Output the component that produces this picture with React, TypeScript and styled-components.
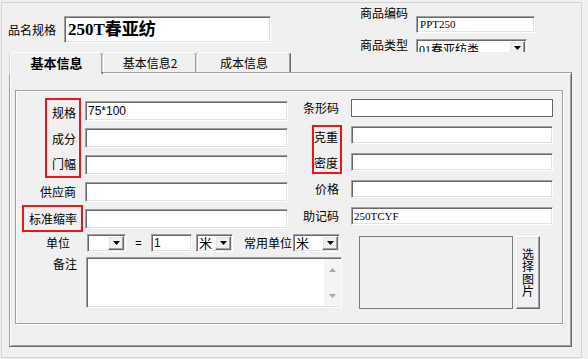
import React from 'react';
import styled, { createGlobalStyle, css } from 'styled-components';

const CJK = `"Noto Sans CJK SC", "Liberation Sans", sans-serif`;
const SONG = `"Liberation Serif", "Noto Sans CJK SC", serif`;

const GlobalStyle = createGlobalStyle`
  html, body {
    margin: 0;
    padding: 0;
    background: #f0f0f0;
  }
  body {
    font-family: ${CJK};
    font-size: 12px;
    color: #000;
  }
`;

const sunken = css`
  box-sizing: border-box;
  border-style: solid;
  border-width: 1px;
  border-color: #a0a0a0 #ffffff #ffffff #a0a0a0;
  box-shadow: inset 1px 1px 0 #696969, inset -1px -1px 0 #e3e3e3;
`;

const raised = css`
  box-sizing: border-box;
  border-style: solid;
  border-width: 1px;
  border-color: #ffffff #696969 #696969 #ffffff;
  box-shadow: inset -1px -1px 0 #a0a0a0, inset 1px 1px 0 #e3e3e3;
`;

type Place = { $r?: string; $c?: string };

const place = css<Place>`
  grid-row: ${p => p.$r || 'auto'};
  grid-column: ${p => p.$c || 'auto'};
`;

const Window = styled.div`
  width: 588px;
  height: 359px;
  overflow: hidden;
  box-sizing: border-box;
  padding: 2px 0 0 1px;
`;

const Frame = styled.div`
  width: 581px;
  height: 356px;
  box-sizing: border-box;
  border: 1px solid #d4d4d4;
`;

const Header = styled.div`
  display: flex;
  height: 49px;
`;

const NameGroup = styled.div`
  display: flex;
  align-items: center;
  gap: 8px;
  height: 27px;
  margin: 13px 0 0 6px;
`;

const Label = styled.span`
  font-family: ${CJK};
  font-size: 12px;
  line-height: 14px;
  white-space: nowrap;
`;

const NameInput = styled.div`
  ${sunken}
  width: 207px;
  height: 27px;
  background: #fff;
  padding: 0 3px;
  font-family: ${SONG};
  font-weight: bold;
  font-size: 17px;
  line-height: 25px;
  white-space: nowrap;
`;

const CodeGrid = styled.div`
  display: grid;
  grid-template-columns: 48px 119px;
  column-gap: 8px;
  align-items: start;
  margin-left: 89px;
  padding-top: 4px;
`;

const CodeLabel = styled(Label)<{ $mt: number }>`
  line-height: 12px;
  height: 12px;
  margin-top: ${p => p.$mt}px;
`;

const SmallInput = styled.div`
  ${sunken}
  height: 17px;
  margin-top: 9px;
  background: #fff;
  padding: 0 3px;
  font-family: ${SONG};
  font-size: 11px;
  line-height: 15px;
`;

const ComboClip = styled.div`
  height: 13px;
  margin-top: 6px;
  overflow: hidden;
`;

const ComboBox = styled.div<{ $w: number }>`
  ${sunken}
  width: ${p => p.$w}px;
  height: 18px;
  padding: 1px;
  background: #fff;
  display: flex;
  flex-shrink: 0;
`;

const ComboText = styled.div<{ $song?: boolean; $drop?: number }>`
  flex: 1;
  white-space: nowrap;
  padding: ${p => p.$drop || 0}px 0 0 1px;
  font-family: ${p => (p.$song ? SONG : CJK)};
  font-size: ${p => (p.$song ? 12 : 13)}px;
  line-height: 14px;
`;

const ArrowBtn = styled.div`
  ${raised}
  width: 16px;
  background: #f0f0f0;
  display: flex;
  align-items: center;
  justify-content: center;
`;

const TabBar = styled.div`
  display: flex;
  align-items: flex-start;
  height: 20px;
  margin-left: 8px;
  position: relative;
  z-index: 1;
`;

const Tab = styled.div<{ $w: number; $active?: boolean }>`
  box-sizing: border-box;
  width: ${p => p.$w}px;
  height: ${p => (p.$active ? 22 : 20)}px;
  background: #f0f0f0;
  border-style: solid;
  border-width: 1px 1px 0 1px;
  border-color: #ffffff #696969 #ffffff #ffffff;
  border-radius: 3px 3px 0 0;
  box-shadow: inset -1px 0 0 #a0a0a0, -1px 0 0 #d8d8d8;
  display: flex;
  align-items: center;
  justify-content: center;
  padding-bottom: ${p => (p.$active ? 2 : 0)}px;
  font-family: ${CJK};
  font-size: ${p => (p.$active ? 13 : 12)}px;
  font-weight: ${p => (p.$active ? 'bold' : 'normal')};
  white-space: nowrap;
`;

const Panel = styled.div`
  box-sizing: border-box;
  width: 563px;
  height: 275px;
  margin-left: 7px;
  border-style: solid;
  border-width: 1px;
  border-color: #a0a0a0 #696969 #696969 #a0a0a0;
  box-shadow: inset 1px 1px 0 #ffffff, inset -1px -1px 0 #a0a0a0;
  overflow: hidden;
`;

const GroupBox = styled.div`
  box-sizing: border-box;
  width: 548px;
  height: 234px;
  margin: 17px 0 0 5px;
  border: 1px solid #a0a0a0;
  box-shadow: 1px 1px 0 #ffffff, inset 1px 1px 0 #ffffff;
  padding-top: 6px;
`;

const FieldGrid = styled.div`
  display: grid;
  grid-template-columns: 69px 203px 63px 202px;
  grid-template-rows: repeat(5, 27px);
`;

const RowLabel = styled(Label)<Place & { $pr: number; $top?: boolean }>`
  ${place}
  justify-self: end;
  align-self: ${p => (p.$top ? 'start' : 'center')};
  margin-top: ${p => (p.$top ? 2 : 0)}px;
  height: ${p => (p.$top ? '18px' : 'auto')};
  line-height: ${p => (p.$top ? '18px' : '14px')};
  padding-right: ${p => p.$pr}px;
`;

const RedBox = styled.div<Place & { $pl: number; $pr: number; $mr: number; $h: number; $mt: number; $gap: number }>`
  ${place}
  box-sizing: border-box;
  justify-self: end;
  align-self: start;
  height: ${p => p.$h}px;
  margin: ${p => p.$mt}px ${p => p.$mr}px 0 0;
  padding: 0 ${p => p.$pr}px 0 ${p => p.$pl}px;
  border: 2px solid #e8161b;
  display: flex;
  flex-direction: column;
  justify-content: center;
  align-items: flex-end;
  gap: ${p => p.$gap}px;
`;

const BoxLabel = styled(Label)<{ $lh: number }>`
  line-height: ${p => p.$lh}px;
`;

const TextBox = styled.div<Place & { $tall?: boolean; $flat?: boolean; $song?: boolean }>`
  ${place}
  ${p =>
    p.$flat
      ? css`
          box-sizing: border-box;
          border: 1px solid #646464;
        `
      : sunken}
  height: ${p => (p.$tall ? 20 : 18)}px;
  align-self: ${p => (p.$tall ? 'center' : 'start')};
  margin-top: ${p => (p.$tall ? 0 : 2)}px;
  background: #fff;
  padding: 0 2px;
  font-family: ${p => (p.$song ? SONG : `"Liberation Sans", ${CJK}`)};
  font-size: ${p => (p.$song ? 11 : 12)}px;
  line-height: ${p => (p.$tall ? 18 : 16)}px;
  white-space: nowrap;
`;

const Lower = styled.div`
  display: flex;
  align-items: flex-start;
`;

const LeftStack = styled.div`
  width: 326px;
  display: flex;
  flex-direction: column;
`;

const UnitRow = styled.div`
  display: flex;
  align-items: center;
  height: 18px;
  margin-top: 2px;
`;

const SideLabel = styled(Label)<{ $w: number; $ml?: number }>`
  display: inline-block;
  width: ${p => p.$w}px;
  margin-left: ${p => p.$ml || 0}px;
  text-align: right;
`;

const Equals = styled.span`
  width: 25px;
  text-align: center;
  font-family: "Liberation Sans", sans-serif;
  font-size: 11px;
`;

const Spaced = styled.div<{ $ml: number }>`
  margin-left: ${p => p.$ml}px;
  display: flex;
`;

const NumBox = styled.div`
  ${sunken}
  width: 41px;
  height: 18px;
  background: #fff;
  padding: 0 2px;
  font-family: "Liberation Sans", sans-serif;
  font-size: 12px;
  line-height: 16px;
`;

const MemoRow = styled.div`
  display: flex;
  align-items: flex-start;
  margin-top: 5px;
`;

const Memo = styled.div`
  ${sunken}
  width: 256px;
  height: 51px;
  margin-left: 9px;
  padding: 1px 0 1px 1px;
  display: flex;
  background: #fff;
`;

const MemoText = styled.div`
  flex: 1;
`;

const ScrollBar = styled.div`
  width: 17px;
  background: #f4f4f4;
  display: flex;
  flex-direction: column;
  justify-content: space-between;
  align-items: center;
  padding: 9px 0 8px;
  box-sizing: border-box;
`;

const PicBox = styled.div`
  box-sizing: border-box;
  width: 154px;
  height: 73px;
  margin: 4px 0 0 17px;
  border: 1px solid #7c7c7c;
  background: #f0f0f0;
`;

const PickButton = styled.div`
  ${raised}
  width: 24px;
  height: 73px;
  margin: 4px 0 0 3px;
  background: #f0f0f0;
  display: flex;
  align-items: center;
  justify-content: center;
`;

const PickLabel = styled.span`
  width: 12px;
  font-family: ${CJK};
  font-size: 12px;
  line-height: 12.3px;
  word-break: break-all;
`;

const Arrow = ({ color = '#000' }: { color?: string }) => (
  <svg width="7" height="4" viewBox="0 0 7 4">
    <path d="M0 0H7L3.5 4Z" fill={color} />
  </svg>
);

const Combo = ({ w, value, song, drop }: { w: number; value?: string; song?: boolean; drop?: number }) => (
  <ComboBox $w={w}>
    <ComboText $song={song} $drop={drop}>{value}</ComboText>
    <ArrowBtn>
      <Arrow />
    </ArrowBtn>
  </ComboBox>
);

export default function App() {
  return (
    <>
      <GlobalStyle />
      <Window>
        <Frame>
          <Header>
            <NameGroup>
              <Label>品名规格</Label>
              <NameInput>250T春亚纺</NameInput>
            </NameGroup>
            <CodeGrid>
              <CodeLabel $mt={0}>商品编码</CodeLabel>
              <SmallInput>PPT250</SmallInput>
              <CodeLabel $mt={6}>商品类型</CodeLabel>
              <ComboClip>
                <Combo w={111} value="01春亚纺类" song drop={2} />
              </ComboClip>
            </CodeGrid>
          </Header>

          <TabBar>
            <Tab $w={93} $active>基本信息</Tab>
            <Tab $w={94}>基本信息2</Tab>
            <Tab $w={94}>成本信息</Tab>
          </TabBar>

          <Panel>
            <GroupBox>
              <FieldGrid>
                <RedBox $r="1 / 4" $c="1" $pl={5} $pr={3} $mr={4} $h={80} $mt={1} $gap={0}>
                  <BoxLabel $lh={25}>规格</BoxLabel>
                  <BoxLabel $lh={27}>成分</BoxLabel>
                  <BoxLabel $lh={24}>门幅</BoxLabel>
                </RedBox>
                <TextBox $r="1" $c="2" $tall>75*100</TextBox>
                <RowLabel $r="1" $c="3" $pr={12} $top>条形码</RowLabel>
                <TextBox $r="1" $c="4" $flat />

                <TextBox $r="2" $c="2" $tall />
                <RedBox $r="2 / 4" $c="3" $pl={0} $pr={2} $mr={9} $h={49} $mt={1} $gap={9}>
                  <BoxLabel $lh={17}>克重</BoxLabel>
                  <BoxLabel $lh={17}>密度</BoxLabel>
                </RedBox>
                <TextBox $r="2" $c="4" />

                <TextBox $r="3" $c="2" $tall />
                <TextBox $r="3" $c="4" />

                <RowLabel $r="4" $c="1" $pr={9}>供应商</RowLabel>
                <TextBox $r="4" $c="2" $tall />
                <RowLabel $r="4" $c="3" $pr={12} $top>价格</RowLabel>
                <TextBox $r="4" $c="4" />

                <RedBox $r="5" $c="1" $pl={5} $pr={4} $mr={2} $h={27} $mt={0} $gap={0}>
                  <BoxLabel $lh={14}>标准缩率</BoxLabel>
                </RedBox>
                <TextBox $r="5" $c="2" $tall />
                <RowLabel $r="5" $c="3" $pr={12} $top>助记码</RowLabel>
                <TextBox $r="5" $c="4" $song>250TCYF</TextBox>
              </FieldGrid>

              <Lower>
                <LeftStack>
                  <UnitRow>
                    <SideLabel $w={54}>单位</SideLabel>
                    <Spaced $ml={17}>
                      <Combo w={39} />
                    </Spaced>
                    <Equals>=</Equals>
                    <NumBox>1</NumBox>
                    <Spaced $ml={4}>
                      <Combo w={37} value="米" />
                    </Spaced>
                    <SideLabel $w={48} $ml={11}>常用单位</SideLabel>
                    <Spaced $ml={1}>
                      <Combo w={47} value="米" />
                    </Spaced>
                  </UnitRow>
                  <MemoRow>
                    <SideLabel $w={61}>备注</SideLabel>
                    <Memo>
                      <MemoText />
                      <ScrollBar>
                        <svg width="7" height="4" viewBox="0 0 7 4">
                          <path d="M0 4H7L3.5 0Z" fill="#a8a8a8" />
                        </svg>
                        <Arrow color="#a8a8a8" />
                      </ScrollBar>
                    </Memo>
                  </MemoRow>
                </LeftStack>
                <PicBox />
                <PickButton>
                  <PickLabel>选择图片</PickLabel>
                </PickButton>
              </Lower>
            </GroupBox>
          </Panel>
        </Frame>
      </Window>
    </>
  );
}
